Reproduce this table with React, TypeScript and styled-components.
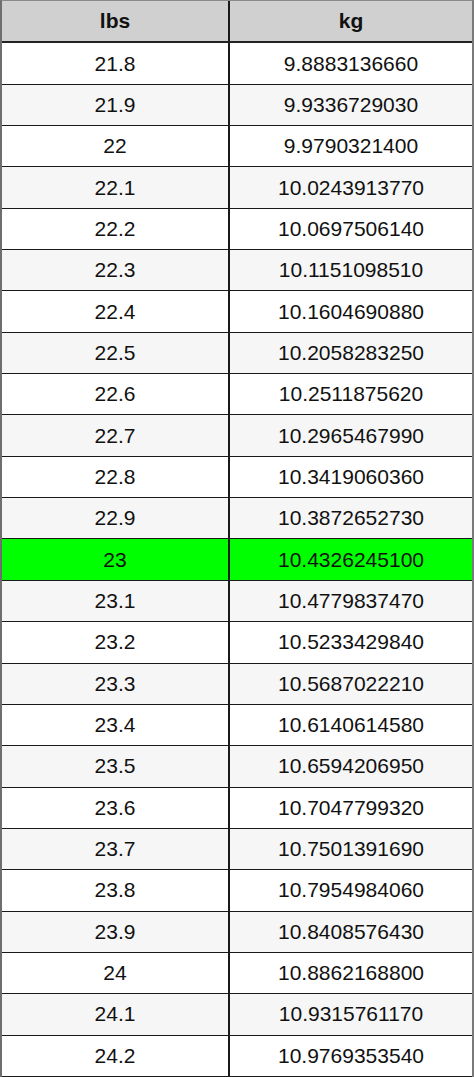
import React from 'react';
import styled, { createGlobalStyle } from 'styled-components';

const GlobalStyle = createGlobalStyle`
  html, body {
    margin: 0;
    padding: 0;
    background: #ffffff;
  }
`;

const Table = styled.div`
  width: 474px;
  height: 1077px;
  box-sizing: border-box;
  display: flex;
  flex-direction: column;
  border-left: 2px solid #6e6e6e;
  border-right: 2px solid #7a7a7a;
  border-top: 1px solid #8a8a8a;
  font-family: 'Liberation Sans', Arial, sans-serif;
  color: #111;
`;

const Row = styled.div<{ $bg: string; $head?: boolean }>`
  flex: 1;
  display: grid;
  grid-template-columns: 228px 1fr;
  background: ${(p) => p.$bg};
  border-bottom: ${(p) => (p.$head ? '2px solid #222' : '1px solid #1a1a1a')};
`;

const Cell = styled.div<{ $head?: boolean }>`
  display: flex;
  align-items: center;
  justify-content: center;
  font-size: 21px;
  font-weight: ${(p) => (p.$head ? 700 : 400)};

  &:first-child {
    border-right: 2px solid #1a1a1a;
  }
`;

const rows: [string, string][] = [
  ['21.8', '9.8883136660'],
  ['21.9', '9.9336729030'],
  ['22', '9.9790321400'],
  ['22.1', '10.0243913770'],
  ['22.2', '10.0697506140'],
  ['22.3', '10.1151098510'],
  ['22.4', '10.1604690880'],
  ['22.5', '10.2058283250'],
  ['22.6', '10.2511875620'],
  ['22.7', '10.2965467990'],
  ['22.8', '10.3419060360'],
  ['22.9', '10.3872652730'],
  ['23', '10.4326245100'],
  ['23.1', '10.4779837470'],
  ['23.2', '10.5233429840'],
  ['23.3', '10.5687022210'],
  ['23.4', '10.6140614580'],
  ['23.5', '10.6594206950'],
  ['23.6', '10.7047799320'],
  ['23.7', '10.7501391690'],
  ['23.8', '10.7954984060'],
  ['23.9', '10.8408576430'],
  ['24', '10.8862168800'],
  ['24.1', '10.9315761170'],
  ['24.2', '10.9769353540'],
];

const App: React.FC = () => {
  return (
    <>
      <GlobalStyle />
      <Table>
        <Row $bg="#d0d0d0" $head>
          <Cell $head>lbs</Cell>
          <Cell $head>kg</Cell>
        </Row>
        {rows.map(([lbs, kg], i) => {
          const bg = lbs === '23' ? '#00ff00' : i % 2 === 0 ? '#ffffff' : '#f6f6f6';
          return (
            <Row key={lbs} $bg={bg}>
              <Cell>{lbs}</Cell>
              <Cell>{kg}</Cell>
            </Row>
          );
        })}
      </Table>
    </>
  );
};

export default App;
